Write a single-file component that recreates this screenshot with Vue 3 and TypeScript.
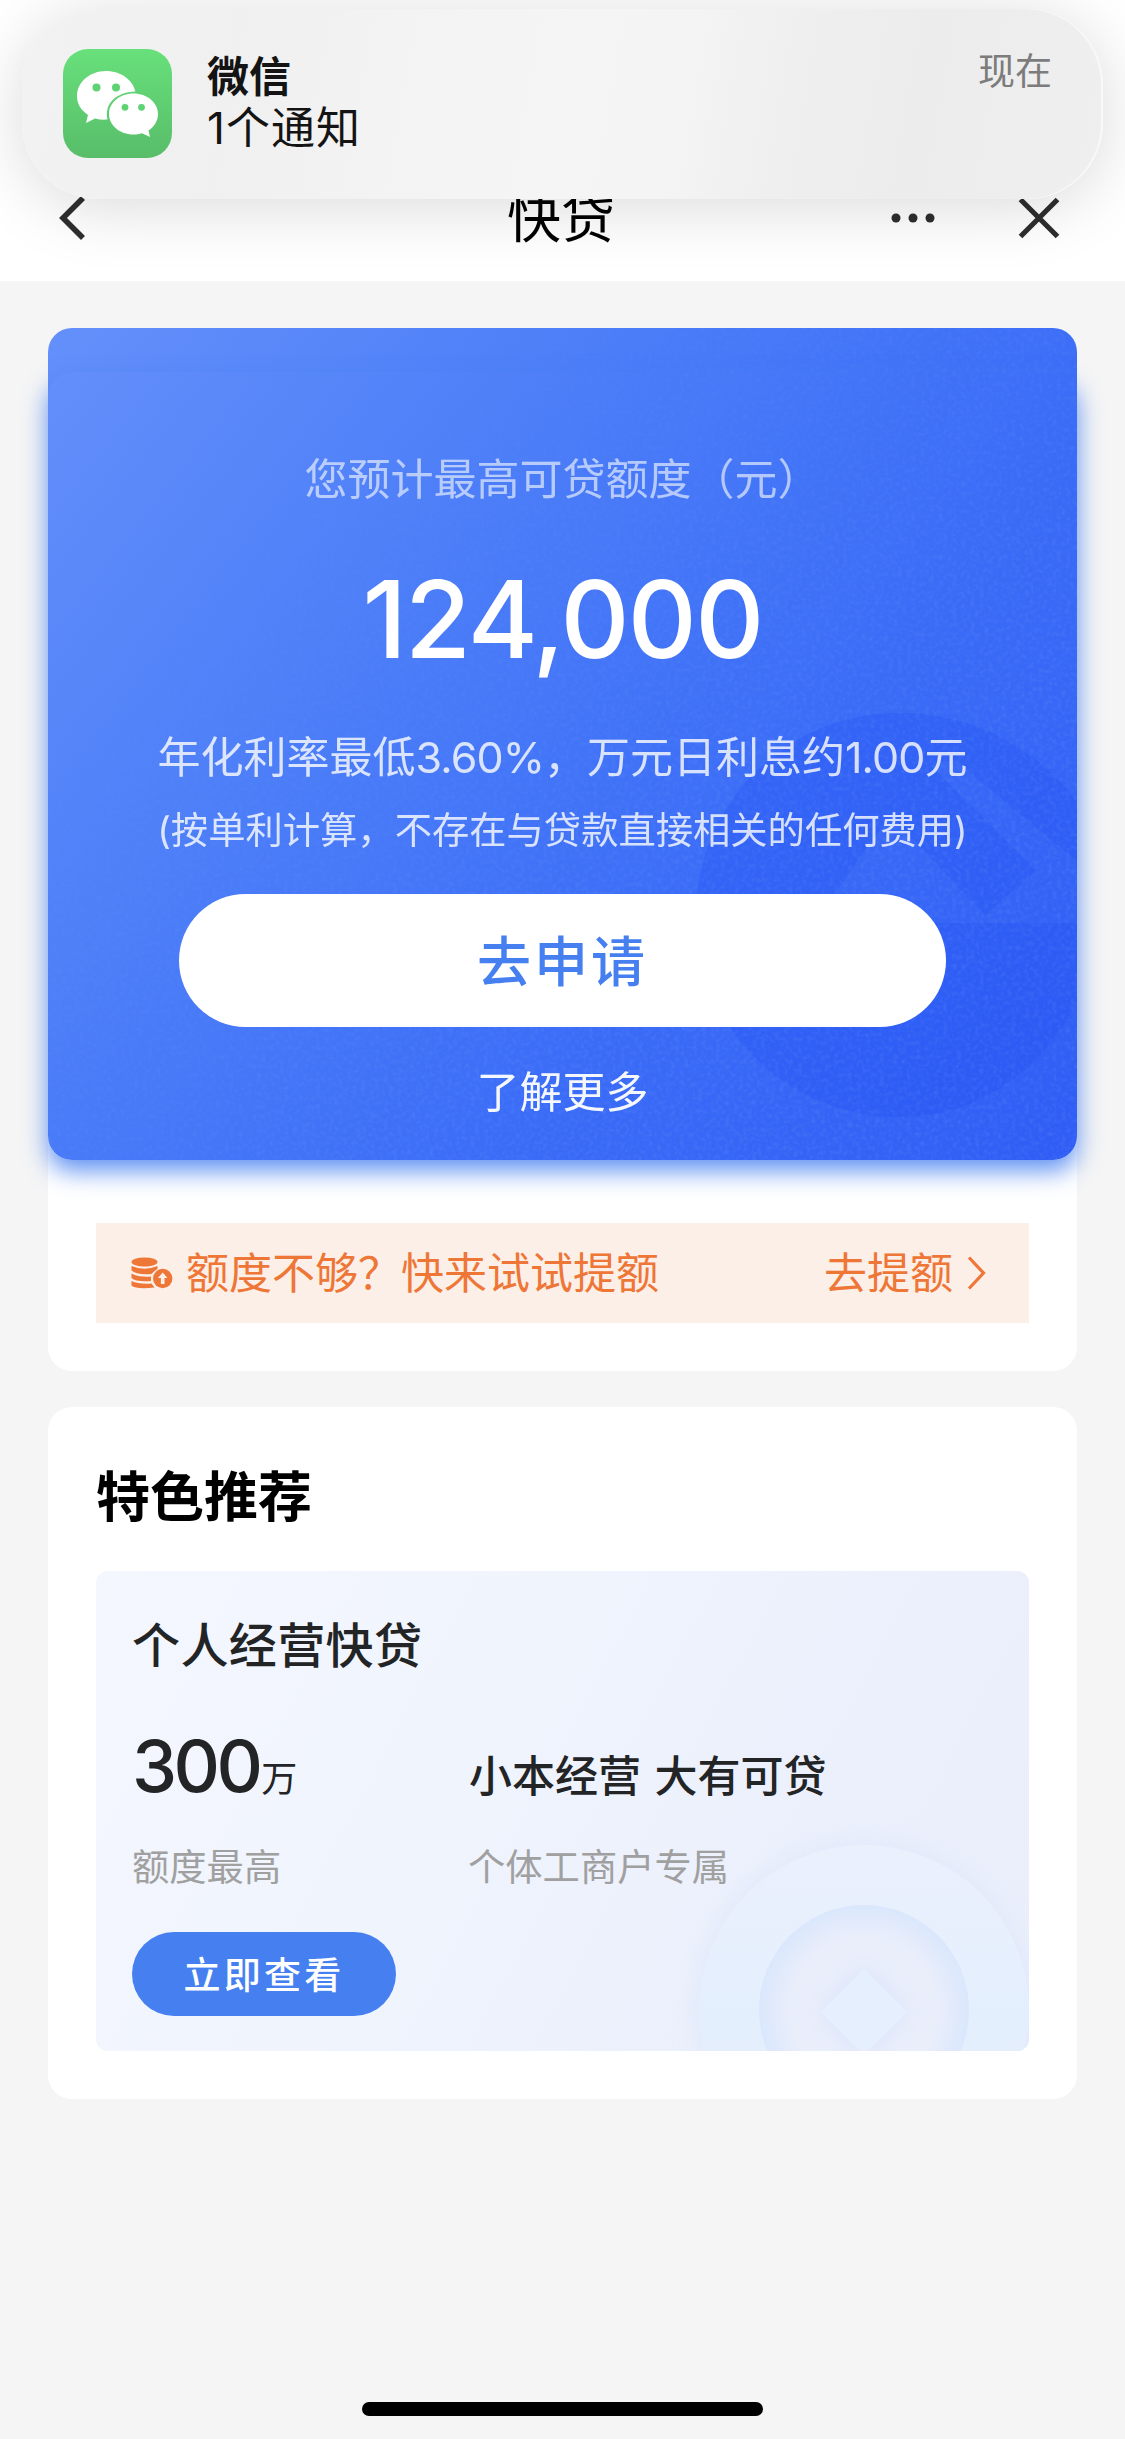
<script setup lang="ts">
import { reactive } from 'vue';

const notice = reactive({
  app: '微信',
  text: '1个通知',
  time: '现在',
});

const loan = reactive({
  label: '您预计最高可贷额度（元）',
  amount: 124000,
  rate: '3.60%',
  interest: '1.00',
  remark: '(按单利计算，不存在与贷款直接相关的任何费用)',
});

const product = reactive({
  name: '个人经营快贷',
  max: '300',
  unit: '万',
  maxLabel: '额度最高',
  slogan: '小本经营 大有可贷',
  target: '个体工商户专属',
});

const formatAmount = (n: number) => n.toLocaleString('en-US');
</script>

<template>
  <div class="page">
    <header class="nav">
      <svg class="nav-back" width="30" height="46" viewBox="0 0 30 46">
        <path d="M26 3 L6 23 L26 43" fill="none" stroke="#2e2e2e" stroke-width="5.6" />
      </svg>
      <h1>快贷</h1>
      <div class="nav-tools">
        <svg width="46" height="12" viewBox="0 0 46 12" fill="#2e2e2e">
          <circle cx="6" cy="6" r="4.5" />
          <circle cx="23" cy="6" r="4.5" />
          <circle cx="40" cy="6" r="4.5" />
        </svg>
        <svg width="44" height="44" viewBox="0 0 44 44">
          <path d="M3.5 3.5 L40.5 40.5 M40.5 3.5 L3.5 40.5" stroke="#2e2e2e" stroke-width="5.2" />
        </svg>
      </div>
    </header>

    <!-- 系统通知横幅 -->
    <div class="notice">
      <div class="notice-icon">
        <svg width="109" height="109" viewBox="0 0 109 109">
          <path
            fill="#fff"
            d="M43 22 C27 22 14 33 14 47 C14 55 18 61 25 66 L23 74 L32 69.500 C36 70.600 40 71 44.500 70.600 C41 54 54 43 72.300 42.500 C70 31 58 22 43 22 Z"
          />
          <path
            fill="#fff"
            d="M70.500 44.500 C57 44.500 46 53.500 46 65 C46 76.500 57 85.500 70.500 85.500 C73.500 85.500 76 85.200 79 84.300 L87 88 L85.500 81.500 C91.500 77.500 95 71.500 95 65 C95 53.500 84 44.500 70.500 44.500 Z"
          />
          <g fill="#5fd274">
            <circle cx="33.500" cy="38.500" r="4" />
            <circle cx="53" cy="38.500" r="4" />
            <circle cx="62" cy="58.300" r="3.400" />
            <circle cx="78.500" cy="58.300" r="3.400" />
          </g>
        </svg>
      </div>
      <div class="notice-body">
        <strong>{{ notice.app }}</strong>
        <span>{{ notice.text }}</span>
      </div>
      <span class="notice-time">{{ notice.time }}</span>
    </div>

    <main>
      <section class="card">
        <div class="loan">
          <svg class="loan-bg" width="1029" height="832" viewBox="0 0 1029 832">
            <defs>
              <filter id="grain" x="0" y="0" width="100%" height="100%">
                <feTurbulence type="fractalNoise" baseFrequency="0.22" numOctaves="2" seed="4" />
                <feColorMatrix values="0 0 0 0 1  0 0 0 0 1  0 0 0 0 1  1.2 0 0 0 -0.5" />
              </filter>
              <linearGradient id="fade" x1="0" y1="0" x2="1" y2="0.8">
                <stop offset="0.15" stop-color="#000" />
                <stop offset="0.8" stop-color="#fff" />
              </linearGradient>
              <mask id="grainMask"><rect width="1029" height="832" fill="url(#fade)" /></mask>
            </defs>
            <path
              class="logo"
              fill-rule="evenodd"
              d="M648 587 A202 202 0 0 1 850 385 C930 385 1000 425 1040 490 V650 C1000 745 930 789 850 789 A202 202 0 0 1 648 587 Z M787 565 L842 487 L937 587 L988 542 L882 437 L907 432 L1040 542 L1040 595 L787 595 Z"
            />
            <g mask="url(#grainMask)" opacity="0.13">
              <rect width="1029" height="832" filter="url(#grain)" />
            </g>
          </svg>
          <div class="loan-body">
            <p class="loan-label">{{ loan.label }}</p>
            <p class="loan-amount">{{ formatAmount(loan.amount) }}</p>
            <p class="loan-rate">
              年化利率最低<span>{{ loan.rate }}</span>，万元日利息约<span>{{ loan.interest }}</span>元
            </p>
            <p class="loan-remark">{{ loan.remark }}</p>
            <button type="button" class="btn-apply">去申请</button>
            <a class="loan-more">了解更多</a>
          </div>
        </div>

        <div class="raise">
          <svg width="42" height="32" viewBox="0 0 42 32">
            <g fill="#ee7636">
              <ellipse cx="13.500" cy="5" rx="13" ry="4.600" />
              <path d="M0.500 9 Q13.500 14.500 26.500 9 V12 Q22 15 20.500 17 Q5 18 0.500 13.500 Z" />
              <path d="M0.500 16.500 Q8 20.500 20 19.500 L20 24 Q5 25 0.500 21 Z" />
              <path d="M0.500 24 Q8 27.500 20.500 26.500 L23.500 30.500 Q5 32.500 0.500 28.500 Z" />
              <circle cx="31.700" cy="21.500" r="9.700" />
            </g>
            <path d="M31.700 15.500 L36.500 21 H33.500 V27 H29.900 V21 H26.900 Z" fill="#fcefe8" />
          </svg>
          <span class="raise-text">额度不够？快来试试提额</span>
          <span class="raise-link">去提额</span>
          <svg width="20" height="36" viewBox="0 0 20 36">
            <path d="M2 2.500 L16.500 18 L2 33.500" fill="none" stroke="#ee7636" stroke-width="3.200" />
          </svg>
        </div>
      </section>

      <section class="card featured">
        <h2>特色推荐</h2>
        <div class="product">
          <svg class="product-bg" width="400" height="240" viewBox="0 0 400 240">
            <defs>
              <filter id="soft" x="-30%" y="-30%" width="160%" height="160%">
                <feGaussianBlur stdDeviation="12" />
              </filter>
              <linearGradient id="ring" x1="0" y1="0" x2="0" y2="1">
                <stop offset="0" stop-color="#ebf0fd" />
                <stop offset="0.5" stop-color="#e4effd" />
                <stop offset="1" stop-color="#e3ebfd" />
              </linearGradient>
              <radialGradient id="hole">
                <stop offset="0.7" stop-color="#eaeefb" />
                <stop offset="1" stop-color="#dae7fc" />
              </radialGradient>
            </defs>
            <circle cx="235" cy="199" r="168" fill="#dce6fa" opacity="0.8" filter="url(#soft)" />
            <circle cx="235" cy="199" r="165" fill="url(#ring)" />
            <circle cx="235" cy="199" r="105" fill="url(#hole)" />
            <path d="M235 158 L278 201 L235 244 L192 201 Z" fill="#d8e3fa" filter="url(#soft)" />
            <path
              d="M235 161 L275 201 L235 241 L195 201 Z"
              fill="#e6effd"
              stroke="#e6effd"
              stroke-width="5"
              stroke-linejoin="round"
            />
          </svg>
          <div class="product-body">
            <h3>{{ product.name }}</h3>
            <div class="product-grid">
              <div class="product-max">
                <b>{{ product.max }}</b><span>{{ product.unit }}</span>
              </div>
              <div class="product-slogan">{{ product.slogan }}</div>
              <div class="product-hint">{{ product.maxLabel }}</div>
              <div class="product-hint">{{ product.target }}</div>
            </div>
            <button type="button" class="btn-view">立即查看</button>
          </div>
        </div>
      </section>
    </main>

    <div class="home-bar"></div>
  </div>
</template>

<style>
body {
  margin: 0;
  background: #f5f5f5;
}
</style>

<style scoped>
.page {
  position: relative;
  display: flex;
  flex-direction: column;
  width: 1125px;
  height: 2439px;
  overflow: hidden;
  background: #f5f5f5;
  font-family: Inter, 'Noto Sans CJK SC', sans-serif;
  color: #000;
}

h1,
h2,
h3,
p {
  margin: 0;
}

button {
  border: none;
  padding: 0;
  font-family: inherit;
}

/* nav */
.nav {
  display: grid;
  grid-template-columns: 1fr auto 1fr;
  align-items: center;
  height: 126px;
  padding: 155px 64px 0 57px;
  box-sizing: content-box;
  width: 1004px;
  background: #fff;
}

.nav h1 {
  font-size: 54px;
  line-height: 80px;
  font-weight: 400;
  padding: 2px 0 0 4px;
}

.nav-tools {
  display: flex;
  justify-content: flex-end;
  align-items: center;
  gap: 81px;
}

/* notification */
.notice {
  position: absolute;
  left: 22px;
  top: 9px;
  width: 1081px;
  height: 190px;
  box-sizing: border-box;
  display: flex;
  align-items: flex-start;
  padding: 40px 51px 0 41px;
  border-radius: 76px;
  background: linear-gradient(100deg, #f2f2f2 0%, #f0f0f0 20%, #f3f3f3 35%, #f5f5f5 50%, #f3f4f3 60%, #efefef 70%, #ececec 82%, #eeefee 100%);
  box-shadow: 0 8px 66px rgba(0, 0, 0, 0.15), inset -2px 0 1px rgba(255, 255, 255, 0.6);
}

.notice-icon {
  width: 109px;
  height: 109px;
  border-radius: 25px;
  background: linear-gradient(#68e07b, #58bd69);
}

.notice-body {
  flex: 1;
  display: flex;
  flex-direction: column;
  margin-left: 35px;
  color: #141414;
}

.notice-body strong {
  font-size: 42px;
  line-height: 56px;
  font-weight: 600;
}

.notice-body span {
  font-size: 44px;
  line-height: 46px;
  letter-spacing: 1px;
}

.notice-time {
  font-size: 37px;
  line-height: 46px;
  color: #7c7c7c;
}

/* cards */
main {
  display: flex;
  flex-direction: column;
  gap: 36px;
  padding: 47px 48px 0;
}

.card {
  border-radius: 24px;
  background: #fff;
}

.loan {
  position: relative;
  height: 788px;
  padding-top: 44px;
  border-radius: 24px;
  background: linear-gradient(128deg, #6490fa 0%, #4b7df8 35%, #3a6cf7 65%, #2f5df5 100%);
}

.loan-bg {
  position: absolute;
  left: 0;
  top: 0;
  border-radius: 24px;
}

.logo {
  fill: #1e4cf2;
  opacity: 0.26;
}

.loan-body {
  position: relative;
  display: flex;
  flex-direction: column;
  align-items: center;
  height: 788px;
  box-sizing: border-box;
  padding-top: 77px;
  border-radius: 24px;
  box-shadow: 0 11px 25px rgba(69, 127, 240, 0.85);
  color: #fff;
}

.loan-label {
  font-size: 43px;
  line-height: 60px;
  opacity: 0.6;
}

.loan-amount {
  margin-top: 50px;
  font-size: 107px;
  line-height: 120px;
  font-weight: 500;
  letter-spacing: -1.7px;
}

.loan-rate {
  margin-top: 48px;
  font-size: 43px;
  line-height: 60px;
  opacity: 0.8;
}

.loan-rate span {
  letter-spacing: -0.9px;
}

.loan-remark {
  margin-top: 18px;
  font-size: 37.300px;
  line-height: 52px;
  opacity: 0.8;
}

.btn-apply {
  width: 767px;
  height: 133px;
  margin-top: 37px;
  padding-bottom: 5px;
  border-radius: 67px;
  background: #fff;
  color: #457ff0;
  font-size: 54px;
  font-weight: 500;
  letter-spacing: 3px;
}

.loan-more {
  margin-top: 35px;
  font-size: 43px;
  line-height: 60px;
  opacity: 0.95;
}

.raise {
  display: flex;
  align-items: center;
  height: 100px;
  margin: 63px 48px 0;
  padding: 0 42px 0 35px;
  background: #fcefe8;
  color: #ee7636;
  font-size: 43px;
  line-height: 60px;
}

.card:first-child {
  height: 1043px;
}

.raise-text {
  flex: 1;
  margin-left: 13px;
}

.raise-link {
  margin-right: 14px;
}

/* featured */
.featured {
  height: 639px;
  padding: 53px 48px 0;
}

.featured h2 {
  font-size: 54px;
  line-height: 76px;
  font-weight: 600;
}

.product {
  position: relative;
  height: 480px;
  margin-top: 35px;
  border-radius: 12px;
  overflow: hidden;
  background: linear-gradient(118deg, #f4f7fe 0%, #f0f4fd 40%, #ecf0fc 70%, #eaeefb 100%);
}

.product-bg {
  position: absolute;
  right: 0;
  bottom: 0;
}

.product-body {
  position: relative;
  padding: 43px 36px 0;
  color: #222426;
}

.product h3 {
  font-size: 48px;
  line-height: 64px;
  font-weight: 500;
  letter-spacing: 0.4px;
}

.product-grid {
  display: grid;
  grid-template-columns: 336px 1fr;
  row-gap: 31px;
  margin-top: 43px;
  align-items: baseline;
}

.product-max {
  line-height: 90px;
  height: 90px;
}

.product-max b {
  font-size: 72px;
  font-weight: 500;
  letter-spacing: -3.6px;
}

.product-max span {
  margin-left: 2px;
  font-size: 36px;
}

.product-slogan {
  padding-left: 1px;
  font-size: 43px;
  font-weight: 500;
  word-spacing: 2px;
}

.product-hint {
  font-size: 37.300px;
  line-height: 52px;
  color: #a0a0a0;
}

.btn-view {
  width: 264px;
  height: 84px;
  margin-top: 38px;
  padding-bottom: 2px;
  border-radius: 42px;
  background: #457ff0;
  color: #fff;
  font-size: 37px;
  font-weight: 500;
  letter-spacing: 3.3px;
}

.home-bar {
  width: 401px;
  height: 14px;
  margin: auto auto 23px;
  border-radius: 7px;
  background: #000;
}
</style>
